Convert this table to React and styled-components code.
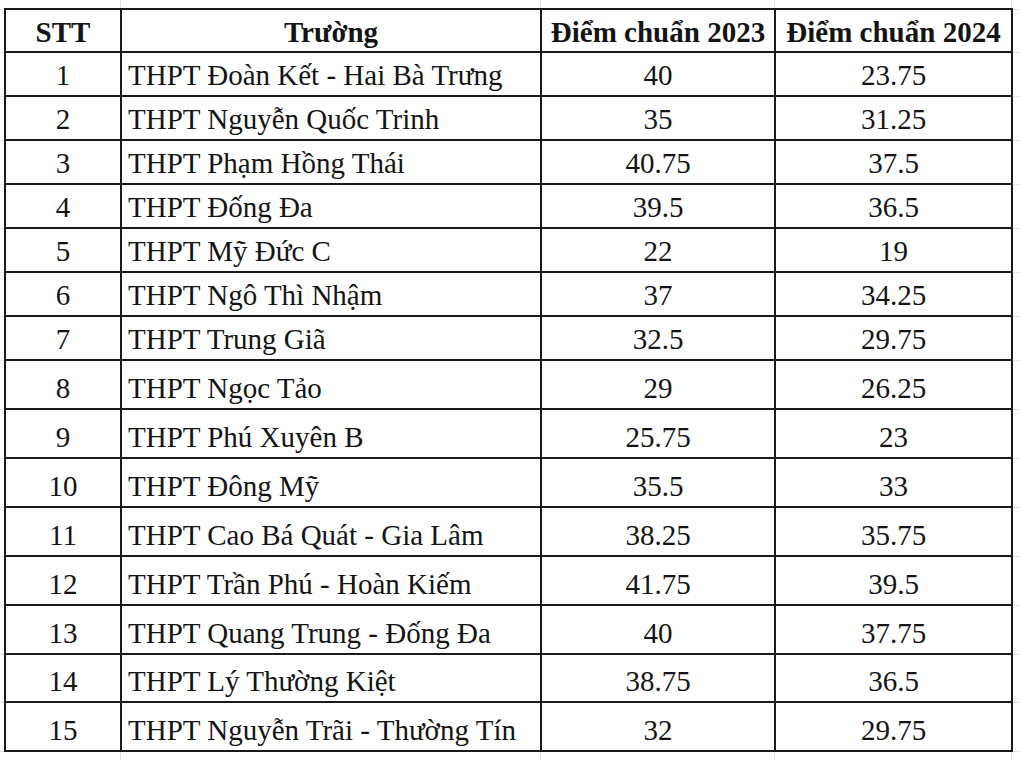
import React from "react";
import styled, { createGlobalStyle } from "styled-components";

const rows = [
  ["1", "THPT Đoàn Kết - Hai Bà Trưng", "40", "23.75"],
  ["2", "THPT Nguyễn Quốc Trinh", "35", "31.25"],
  ["3", "THPT Phạm Hồng Thái", "40.75", "37.5"],
  ["4", "THPT Đống Đa", "39.5", "36.5"],
  ["5", "THPT Mỹ Đức C", "22", "19"],
  ["6", "THPT Ngô Thì Nhậm", "37", "34.25"],
  ["7", "THPT Trung Giã", "32.5", "29.75"],
  ["8", "THPT Ngọc Tảo", "29", "26.25"],
  ["9", "THPT Phú Xuyên B", "25.75", "23"],
  ["10", "THPT Đông Mỹ", "35.5", "33"],
  ["11", "THPT Cao Bá Quát - Gia Lâm", "38.25", "35.75"],
  ["12", "THPT Trần Phú - Hoàn Kiếm", "41.75", "39.5"],
  ["13", "THPT Quang Trung - Đống Đa", "40", "37.75"],
  ["14", "THPT Lý Thường Kiệt", "38.75", "36.5"],
  ["15", "THPT Nguyễn Trãi - Thường Tín", "32", "29.75"],
];

const rowHeights = [43, 44, 44, 44, 44, 44, 44, 44, 49, 49, 49, 49, 49, 49, 48, 49];
const colLines = [120, 540, 774, 1011];
const rowLines = rowHeights.reduce((acc, h) => [...acc, acc[acc.length - 1] + h], [9]);

const faint = "#e3e3e3";
const gridBg = [
  ...colLines.map((x) => `linear-gradient(${faint}, ${faint}) ${x}px 0 / 1px 100% no-repeat`),
  ...rowLines.map((y) => `linear-gradient(${faint}, ${faint}) 0 ${y}px / 100% 1px no-repeat`),
  "#ffffff",
].join(", ");

const GlobalStyle = createGlobalStyle`
  html, body { margin: 0; padding: 0; background: #fff; }
  body { font-family: "Liberation Serif", "Times New Roman", serif; }
`;

const Sheet = styled.div`
  width: 1020px;
  height: 760px;
  overflow: hidden;
  box-sizing: border-box;
  padding: 8px 0 0 4px;
  background: ${gridBg};
`;

const Table = styled.div`
  display: grid;
  grid-template-columns: 116px 420px 234px 237px;
  grid-template-rows: ${rowHeights.map((h) => `${h}px`).join(" ")};
  width: max-content;
  border-left: 2px solid #1a1a1a;
  border-top: 2px solid #1a1a1a;
  background: #fff;
`;

const Cell = styled.div`
  box-sizing: border-box;
  display: flex;
  align-items: flex-end;
  justify-content: ${(p) => (p.$left ? "flex-start" : "center")};
  padding: 0 0 ${(p) => (p.$head ? "2px" : "3px")} ${(p) => (p.$left ? "6px" : "0")};
  border-right: 2px solid #1a1a1a;
  border-bottom: 2px solid #1a1a1a;
  font-family: "Liberation Serif", "Times New Roman", serif;
  font-size: 29px;
  line-height: 33px;
  font-weight: ${(p) => (p.$head ? 700 : 400)};
  color: #141414;
  white-space: nowrap;
  overflow: hidden;
`;

export default function App() {
  return (
    <>
      <GlobalStyle />
      <Sheet>
        <Table>
          <Cell $head>STT</Cell>
          <Cell $head>Trường</Cell>
          <Cell $head>Điểm chuẩn 2023</Cell>
          <Cell $head>Điểm chuẩn 2024</Cell>
          {rows.map(([n, name, a, b]) => (
            <React.Fragment key={n}>
              <Cell>{n}</Cell>
              <Cell $left>{name}</Cell>
              <Cell>{a}</Cell>
              <Cell>{b}</Cell>
            </React.Fragment>
          ))}
        </Table>
      </Sheet>
    </>
  );
}
